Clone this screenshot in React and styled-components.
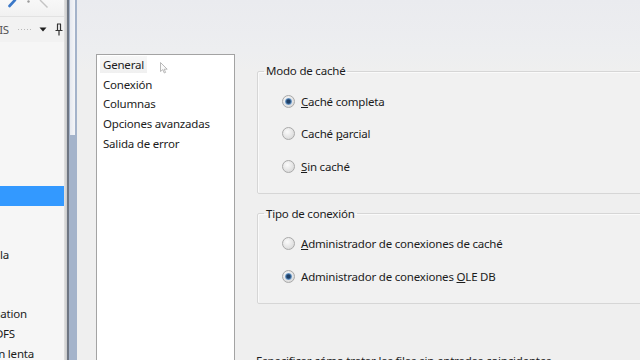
import React from "react";
import styled, { createGlobalStyle, css } from "styled-components";

const GlobalStyle = createGlobalStyle`
  html, body { margin: 0; padding: 0; }
  body {
    font-family: "Noto Sans", "Open Sans", sans-serif;
    font-size: 11.5px;
    letter-spacing: -0.2px;
    color: #1c1c1c;
  }
`;

const Screen = styled.div`
  width: 640px;
  height: 360px;
  display: flex;
  overflow: hidden;
  background: #efefef;
`;

const LeftPanel = styled.div`
  width: 64px;
  flex: none;
  display: flex;
  flex-direction: column;
  background: #f6f6f6;
`;

const Toolbar = styled.div`
  height: 16px;
  flex: none;
  background: linear-gradient(#f8f8f8, #f1f1f1);
  border-bottom: 1px solid #e2e2e2;
  overflow: hidden;
`;

const HeaderRow = styled.div`
  height: 25px;
  flex: none;
  display: flex;
  align-items: center;
  gap: 8px;
  background: #f2f2f2;
  color: #555;
`;

const Clip = styled.span`
  display: block;
  width: ${(p) => p.w}px;
  flex: none;
  overflow: hidden;
  white-space: nowrap;
  direction: rtl;
  text-align: left;
`;

const Grip = styled.span`
  width: 14px;
  height: 3px;
  flex: none;
  background-image: radial-gradient(circle, #b8b8b8 0.8px, transparent 1px);
  background-size: 3px 3px;
`;

const ToolList = styled.div`
  flex: 1;
  padding-top: 6px;
  display: flex;
  flex-direction: column;
  color: #1c1c1c;
`;

const ToolRow = styled.div`
  height: 19.7px;
  flex: none;
  display: flex;
  align-items: center;
  ${(p) =>
    p.selected &&
    css`
      background: #3399ff;
    `}
`;

const Splitter = styled.div`
  width: 13px;
  flex: none;
  display: flex;
`;

const Shade = styled.div`
  width: 4px;
  background: linear-gradient(90deg, #e2e2e2, #c9c9c9);
`;

const DarkLine = styled.div`
  width: 2px;
  background: #6e7683;
`;

const Frame = styled.div`
  width: 7px;
  background: #a4b3ca;
  padding: 0 2px 0 1px;
  display: flex;
  flex-direction: column;
`;

const FrameLight = styled.div`
  height: 135px;
  background: linear-gradient(90deg, #e6e9ef, #f4f5f8);
`;

const Dialog = styled.div`
  flex: 1;
  display: flex;
  align-items: flex-start;
  padding: 54px 0 0 19px;
  overflow: hidden;
  background: linear-gradient(#eaebef 0px, #edeef0 50px, #efefef 72px);
`;

const ListBox = styled.div`
  width: 139px;
  height: 320px;
  flex: none;
  box-sizing: border-box;
  border: 1px solid #a3a3a3;
  background: #fff;
  padding: 0 0 0 3px;
  position: relative;
`;

const PageItem = styled.div`
  height: 19.6px;
  display: flex;
  align-items: center;
  width: fit-content;
  padding: 0 3px;
  ${(p) =>
    p.hover &&
    css`
      background: linear-gradient(#f7f7f7, #f0f0f0);
      height: 17px;
      margin: 1.3px 0;
    `}
`;

const Cursor = styled.svg`
  position: absolute;
  left: 63px;
  top: 7px;
`;

const Content = styled.div`
  width: 430px;
  flex: none;
  margin: 9px 0 0 22px;
  display: flex;
  flex-direction: column;
`;

const Group = styled.fieldset`
  margin: 0 0 ${(p) => p.gap || 0}px 0;
  padding: 6px 0 10px 24px;
  border: 1px solid #d6d6d6;
  box-shadow: inset 1px 1px 0 #fafafa;
  border-radius: 2px;
  background: #f1f1f1;
  min-width: 0;
`;

const Legend = styled.legend`
  padding: 0 2px;
  margin-left: -18px;
  line-height: 16px;
  color: #1c1c1c;
`;

const Option = styled.label`
  height: 32.5px;
  display: flex;
  align-items: center;
  gap: 6px;
`;

const Radio = styled.span`
  width: 13px;
  height: 13px;
  box-sizing: border-box;
  flex: none;
  border-radius: 50%;
  border: 1px solid #a9a9a9;
  background: radial-gradient(circle at 40% 35%, #fbfbfb, #dcdcdc 75%);
  display: flex;
  align-items: center;
  justify-content: center;
  ${(p) =>
    p.checked &&
    css`
      &::after {
        content: "";
        width: 7px;
        height: 7px;
        border-radius: 50%;
        background: radial-gradient(circle, #1f3f66 0 1.6px, #3f6f9f 2.4px, #8fb4dc 3.5px);
      }
    `}
`;

const Note = styled.div`
  margin: 49px 0 0 -1px;
  line-height: 16px;
  white-space: nowrap;
`;

const tools = [
  "", "", "", "", "", "", "",
  { sel: true },
  "", "",
  { t: "Búsqueda en tabla", w: 9 },
  "", "",
  { t: "Aggregation", w: 27 },
  { t: "Origen de HDFS", w: 15 },
  { t: "Dimensión de variación lenta", w: 34 },
];

const pages = ["General", "Conexión", "Columnas", "Opciones avanzadas", "Salida de error"];

export default function App() {
  return (
    <>
      <GlobalStyle />
      <Screen>
        <LeftPanel>
          <Toolbar>
            <svg width="64" height="16" viewBox="0 0 64 16">
              <path d="M9.5 6 L15 0" stroke="#3b78c8" strokeWidth="2.6" strokeLinecap="round" />
              <circle cx="28.5" cy="1.5" r="1.2" fill="#9a9a9a" />
              <path d="M40 0 L47.5 7.5" stroke="#c4c4c4" strokeWidth="1.4" />
            </svg>
          </Toolbar>
          <HeaderRow>
            <Clip w={9}>Cuadro de herramientas SSIS</Clip>
            <Grip />
            <svg width="8" height="5" viewBox="0 0 8 5">
              <path d="M0.5 0.5 H7.5 L4 4.5 Z" fill="#1e1e1e" />
            </svg>
            <svg width="8" height="13" viewBox="0 0 8 13">
              <path d="M2 1 H6 M2.5 1 V7 M5.5 1 V7 M0.5 7.5 H7.5 M4 7.5 V12.5" stroke="#333" strokeWidth="1.2" fill="none" />
            </svg>
          </HeaderRow>
          <ToolList>
            {tools.map((it, i) =>
              typeof it === "string" ? (
                <ToolRow key={i} />
              ) : it.sel ? (
                <ToolRow key={i} selected />
              ) : (
                <ToolRow key={i}>
                  <Clip w={it.w}>{it.t}</Clip>
                </ToolRow>
              )
            )}
          </ToolList>
        </LeftPanel>
        <Splitter>
          <Shade />
          <DarkLine />
          <Frame>
            <FrameLight />
          </Frame>
        </Splitter>
        <Dialog>
          <ListBox>
            {pages.map((p, i) => (
              <PageItem key={p} hover={i === 0}>
                {p}
              </PageItem>
            ))}
            <Cursor width="8" height="12" viewBox="0 0 8 12">
              <path d="M0.5 0.5 V9.5 L2.8 7.6 L4.3 11 L5.6 10.4 L4.2 7.2 H7.2 Z" fill="#fafafa" stroke="#a8a8a8" strokeWidth="0.8" />
            </Cursor>
          </ListBox>
          <Content>
            <Group gap={12}>
              <Legend>Modo de caché</Legend>
              <Option>
                <Radio checked />
                <span><u>C</u>aché completa</span>
              </Option>
              <Option>
                <Radio />
                <span>Caché <u>p</u>arcial</span>
              </Option>
              <Option>
                <Radio />
                <span><u>S</u>in caché</span>
              </Option>
            </Group>
            <Group>
              <Legend>Tipo de conexión</Legend>
              <Option>
                <Radio />
                <span><u>A</u>dministrador de conexiones de caché</span>
              </Option>
              <Option>
                <Radio checked />
                <span>Administrador de conexiones <u>O</u>LE DB</span>
              </Option>
            </Group>
            <Note>Especificar cómo tratar las filas sin entradas coincidentes.</Note>
          </Content>
        </Dialog>
      </Screen>
    </>
  );
}
